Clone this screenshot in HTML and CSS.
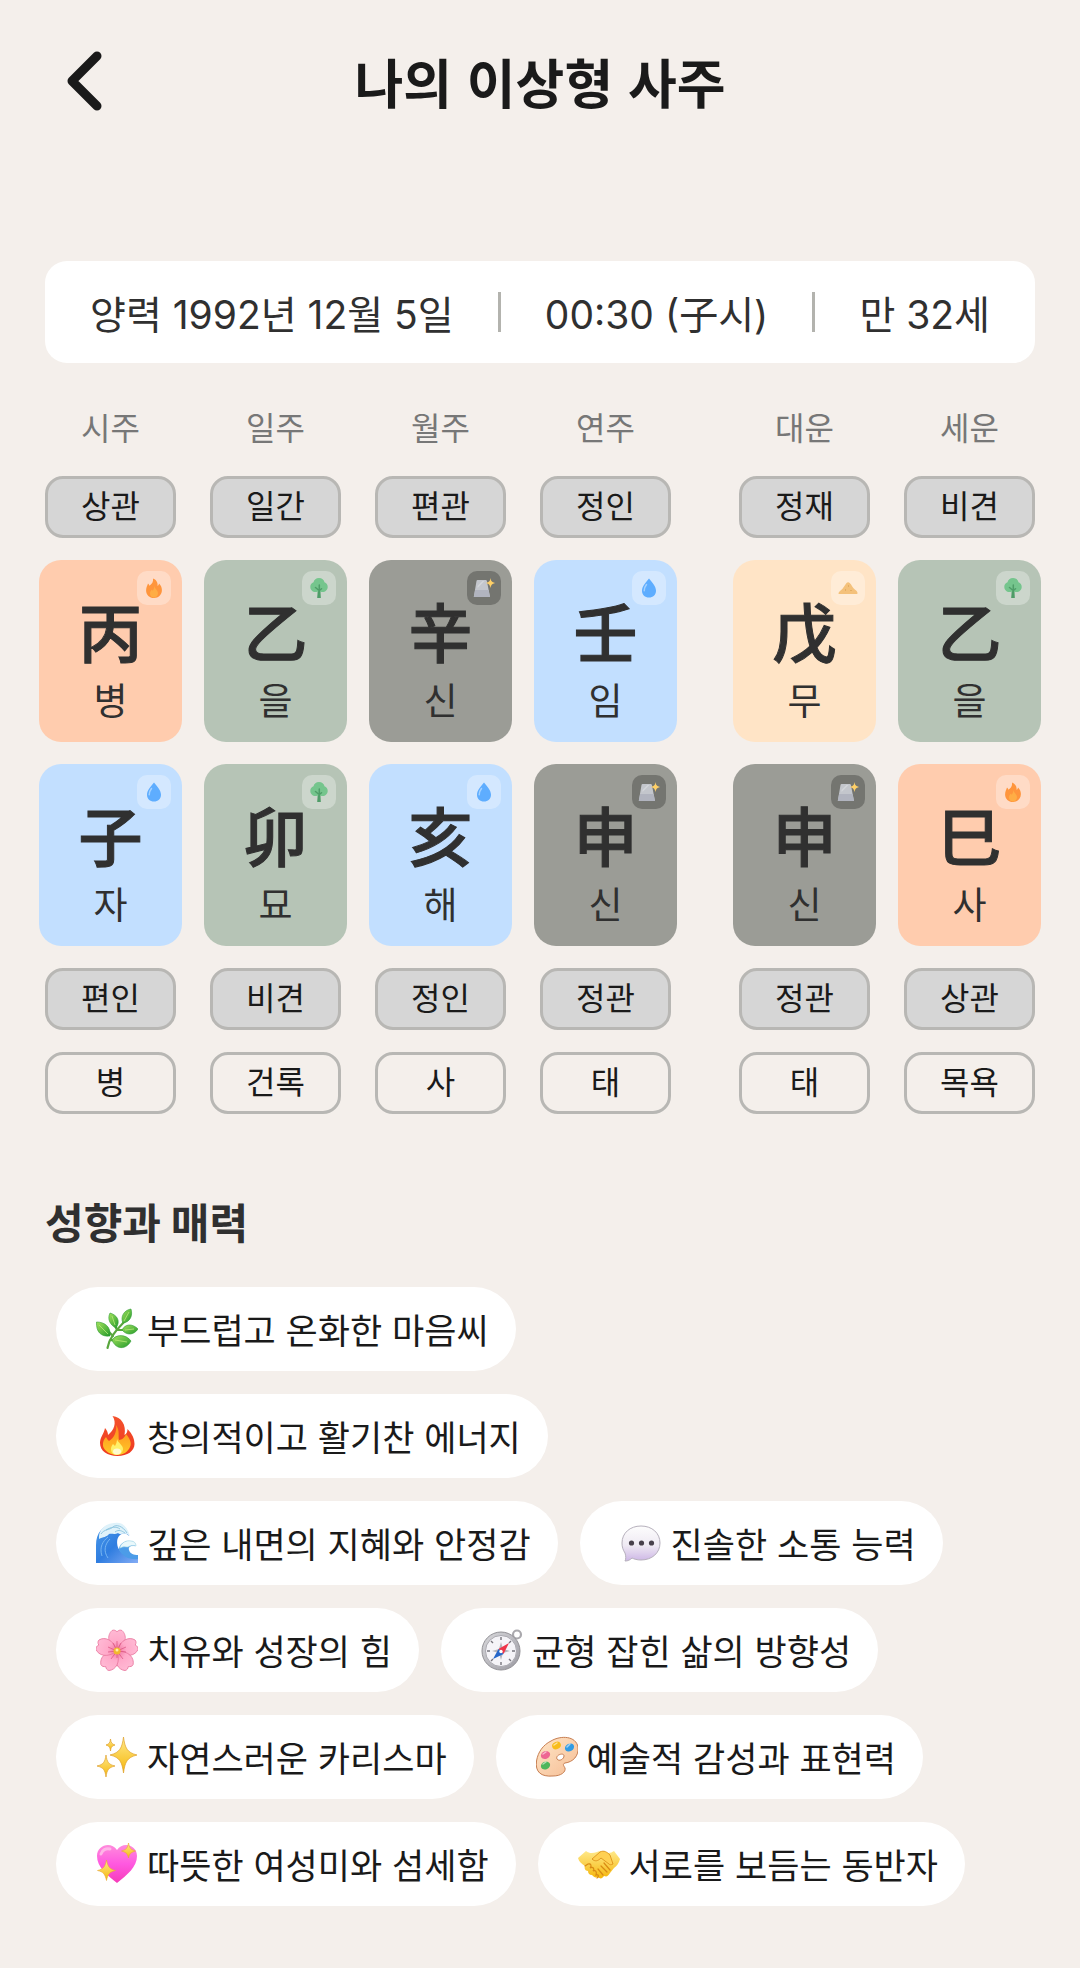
FILE: index.html
```
<!DOCTYPE html>
<html lang="ko">

<head>
  <meta charset="UTF-8" />
  <meta name="viewport" content="width=device-width, initial-scale=1" />
  <title>나의 이상형 사주</title>
  <link rel="stylesheet" href="styles.css">
</head>

<body>
  <!-- Shared icons -->
  <svg class="sprite" aria-hidden="true">
    <defs>
      <linearGradient id="leafFill" x1="0" y1="0" x2="1" y2="1">
        <stop offset="0" stop-color="#a4e25c" /><stop offset="1" stop-color="#249a2c" />
      </linearGradient>
      <linearGradient id="flameOuter" x1="0" y1="0" x2="0" y2="1">
        <stop offset="0" stop-color="#f4512c" /><stop offset="1" stop-color="#ee3b20" />
      </linearGradient>
      <linearGradient id="flameInner" x1="0" y1="0" x2="0" y2="1">
        <stop offset="0" stop-color="#ff8a1c" /><stop offset="1" stop-color="#ffc928" />
      </linearGradient>
      <linearGradient id="waveFill" x1="0" y1="0" x2="1" y2="1">
        <stop offset="0" stop-color="#4b9bea" /><stop offset=".5" stop-color="#2f7de0" /><stop offset="1" stop-color="#83acf5" />
      </linearGradient>
      <linearGradient id="bubbleFill" x1="0" y1="0" x2="0" y2="1">
        <stop offset="0" stop-color="#fdfdfd" /><stop offset=".55" stop-color="#efeaf3" /><stop offset="1" stop-color="#cdb6e6" />
      </linearGradient>
      <radialGradient id="petalFill" gradientUnits="userSpaceOnUse" cx="21" cy="22" r="21">
        <stop offset="0" stop-color="#ee6f9c" /><stop offset=".45" stop-color="#ffa9c9" /><stop offset="1" stop-color="#ffb9d4" />
      </radialGradient>
      <linearGradient id="goldFill" x1="0" y1="0" x2="0" y2="1">
        <stop offset="0" stop-color="#ffe98a" /><stop offset="1" stop-color="#f5b70c" />
      </linearGradient>
      <linearGradient id="heartFill" x1="0" y1="0" x2="0" y2="1">
        <stop offset="0" stop-color="#ff8bdc" /><stop offset=".5" stop-color="#ff58e0" /><stop offset="1" stop-color="#f63cb9" />
      </linearGradient>
      <linearGradient id="woodFill" x1="0" y1="0" x2="1" y2="1">
        <stop offset="0" stop-color="#ffe6c8" /><stop offset="1" stop-color="#f5bd94" />
      </linearGradient>
      <linearGradient id="metalFill" x1="0" y1="0" x2="1" y2="1">
        <stop offset="0" stop-color="#d9d9dc" /><stop offset="1" stop-color="#9b9aa2" />
      </linearGradient>
    </defs>

    <symbol id="el-fire" viewBox="0 0 20 20">
      <path d="M9 .5c3 1.200 5 3.500 4.600 7.500.8-.5 1.200-1.400 1.400-2.500 2 1.800 2.900 4.200 2.900 6.500 0 4.500-3.400 8-7.900 8s-7.900-3.200-7.900-7.600C2.100 9.500 3.200 8 4 5.500c.8.600 1.200 1.300 1.400 2.200C8 6 9.500 4 9 .5z" fill="#ff953c" />
      <path d="M10.200 8c.6 2.600 3.800 4.400 3.800 7.300 0 2.500-1.700 4.100-4 4.100s-4-1.600-4-4c0-1.800.9-2.900 1.900-4 .4.600.6 1 .8 1.400 1.100-1.200 1.700-3 1.500-4.800z" fill="#ffad45" />
    </symbol>
    <symbol id="el-wood" viewBox="0 0 20 20">
      <path d="M9 9h2.200l.6 11H8.200z" fill="#4f9d68" />
      <path d="M10 0c2.900 0 5 1.700 5.500 4.200 2 .7 3.200 2.300 3.200 4.500 0 3.200-2.300 5.300-5.300 5.300-1.200 0-2-.2-3.400-1-1.400.8-2.200 1-3.400 1-3 0-5.300-2.100-5.300-5.300 0-2.200 1.200-3.800 3.200-4.500C5 1.700 7.100 0 10 0z" fill="#75c58d" />
      <path d="M6.500 9.500l3 2.500M10.300 7v13M11 12l1.500-1.300" fill="none" stroke="#4f9d68" stroke-width="1.500" stroke-linecap="round" />
    </symbol>
    <symbol id="el-water" viewBox="0 0 20 20">
      <path d="M10 .5c3.200 4 7 8 7 12.200 0 4-3 6.800-7 6.800s-7-2.800-7-6.800C3 8.500 6.800 4.500 10 .5z" fill="#5eadff" />
      <path d="M7.500 6.500C6 8.500 5 10.300 5.200 12.700" fill="none" stroke="#a4d1ff" stroke-width="1.500" stroke-linecap="round" />
    </symbol>
    <symbol id="el-earth" viewBox="0 0 20 20">
      <path d="M.5 15c.8-2 2.700-2.600 4-4.200L8.500 5c1-.9 2.300-.9 3.200 0 1.800 1.700 2.400 4 4.300 5.700 1.600 1.300 3 2 3.600 4.300 0 .7-.5 1-1.100 1H1.400C.7 16 .4 15.600.5 15z" fill="#f4c17b" />
      <path d="M7 12h1M12.500 12.500h1M10 8h1" stroke="#d49b4f" />
    </symbol>
    <symbol id="el-metal" viewBox="0 0 22 20">
      <path d="M4.600 2h8.200c.6 0 1 .3 1.100.9L17 19H.8L3.500 2.900c.1-.6.5-.9 1.100-.9z" fill="#c3c6cc" />
      <path d="M2.100 12h13.500L17 19H.8z" fill="#b1b4bf" />
      <path d="M4.500 8l5-5h2l-7 7z" fill="#d3d6da" />
      <path d="M17.500 0c.5 3 1.200 4 4.500 5-3.300 1-4 2-4.500 5.200-.5-3.200-1.200-4.200-4.500-5.200 3.300-1 4-2 4.500-5z" fill="#ffd067" />
    </symbol>
  </svg>

  <header class="topbar">
    <button class="back" type="button" aria-label="뒤로">
      <svg viewBox="0 0 36 60" width="36" height="60" aria-hidden="true">
        <path d="M31 5L6 30l25 25" fill="none" stroke="currentColor" stroke-width="9" stroke-linecap="round" stroke-linejoin="round" />
      </svg>
    </button>
    <h1>나의 이상형 사주</h1>
  </header>

  <main>
    <!-- Birth info -->
    <div class="birth">
      <span>양력 1992년 12월 5일</span>
      <i class="divider"></i>
      <span>00:30 (子시)</span>
      <i class="divider"></i>
      <span>만 32세</span>
    </div>

    <!-- Pillars, the narrow empty column splits off the luck pillars -->
    <table class="pillars">
      <colgroup>
        <col span="4">
        <col class="split">
        <col span="2">
      </colgroup>
      <thead>
        <tr>
          <th scope="col">시주</th>
          <th scope="col">일주</th>
          <th scope="col">월주</th>
          <th scope="col">연주</th>
          <td></td>
          <th scope="col">대운</th>
          <th scope="col">세운</th>
        </tr>
      </thead>
      <tbody>
        <tr>
          <td><div class="tag filled">상관</div></td>
          <td><div class="tag filled">일간</div></td>
          <td><div class="tag filled">편관</div></td>
          <td><div class="tag filled">정인</div></td>
          <td></td>
          <td><div class="tag filled">정재</div></td>
          <td><div class="tag filled">비견</div></td>
        </tr>
        <tr>
          <td><div class="card fire"><span class="badge"><svg><use href="#el-fire" /></svg></span><b>丙</b><span>병</span></div></td>
          <td><div class="card wood"><span class="badge"><svg><use href="#el-wood" /></svg></span><b>乙</b><span>을</span></div></td>
          <td><div class="card metal"><span class="badge"><svg><use href="#el-metal" /></svg></span><b>辛</b><span>신</span></div></td>
          <td><div class="card water"><span class="badge"><svg><use href="#el-water" /></svg></span><b>壬</b><span>임</span></div></td>
          <td></td>
          <td><div class="card earth"><span class="badge"><svg><use href="#el-earth" /></svg></span><b>戊</b><span>무</span></div></td>
          <td><div class="card wood"><span class="badge"><svg><use href="#el-wood" /></svg></span><b>乙</b><span>을</span></div></td>
        </tr>
        <tr>
          <td><div class="card water"><span class="badge"><svg><use href="#el-water" /></svg></span><b>子</b><span>자</span></div></td>
          <td><div class="card wood"><span class="badge"><svg><use href="#el-wood" /></svg></span><b>卯</b><span>묘</span></div></td>
          <td><div class="card water"><span class="badge"><svg><use href="#el-water" /></svg></span><b>亥</b><span>해</span></div></td>
          <td><div class="card metal"><span class="badge"><svg><use href="#el-metal" /></svg></span><b>申</b><span>신</span></div></td>
          <td></td>
          <td><div class="card metal"><span class="badge"><svg><use href="#el-metal" /></svg></span><b>申</b><span>신</span></div></td>
          <td><div class="card fire"><span class="badge"><svg><use href="#el-fire" /></svg></span><b>巳</b><span>사</span></div></td>
        </tr>
        <tr>
          <td><div class="tag filled">편인</div></td>
          <td><div class="tag filled">비견</div></td>
          <td><div class="tag filled">정인</div></td>
          <td><div class="tag filled">정관</div></td>
          <td></td>
          <td><div class="tag filled">정관</div></td>
          <td><div class="tag filled">상관</div></td>
        </tr>
        <tr>
          <td><div class="tag">병</div></td>
          <td><div class="tag">건록</div></td>
          <td><div class="tag">사</div></td>
          <td><div class="tag">태</div></td>
          <td></td>
          <td><div class="tag">태</div></td>
          <td><div class="tag">목욕</div></td>
        </tr>
      </tbody>
    </table>

    <!-- Traits -->
    <section class="traits">
      <h2>성향과 매력</h2>
      <ul class="chips">
        <li>
          <svg viewBox="0 0 42 42" aria-hidden="true">
            <path d="M11.500 40C13 31 18 24 32 10M17 28l-8-8M21 22l-4-9M22 22h9M14 32l9 1" fill="none" stroke="#58a63c" stroke-width="2.200" stroke-linecap="round" />
            <g fill="url(#leafFill)" stroke="#2c9a30" stroke-width=".6">
              <path d="M14 28C5 29 0 24 .5 14 9 14 15 19 14 28z" />
              <path d="M20 20c-6-3-9-9-6-15 7 2 11 8 6 15z" />
              <path d="M27 15c-3-6 1-13 8-14 2 7-1 13-8 14z" />
              <path d="M26 22c3-6 10-7 16-1-4 6-11 7-16 1z" />
              <path d="M16 32c4-6 14-6 19 1-5 9-15 9-19-1z" />
            </g>
            <path d="M3 17l9 9M16 8l3 9M33 4l-5 9M29 22l9-1M19 32l12 2" stroke="#b8ea79" stroke-width=".8" />
          </svg>
          부드럽고 온화한 마음씨
        </li>
        <li>
          <svg viewBox="0 0 42 42" aria-hidden="true">
            <path d="M16.500 1c9 1 14 9 12 19 2-1 3-3 3-6 5 5 7 10 7 15 0 7-7 12-17 12S4 36 4 28c0-6 4-9 5-15 2 2 3 5 3 7 6-5 9-12 4.500-19z" fill="url(#flameOuter)" />
            <path d="M20 10c4 5 2 11 3 15 3 0 6-3 7-6 4 5 6 9 4 13-2 5-7 8-13 8S8 36 7 31c-.5-4 1-7 3-9 1 2 2 3 3 4 5-3 8-9 7-16z" fill="url(#flameInner)" />
            <path d="M21 24c1 4 6 6 6 10 0 3-3 6-6.500 6S15 37 15 34c0-2 1-4 2-5l2 2c1-2 2-4 2-7z" fill="#fff06a" />
            <ellipse cx="21" cy="36.500" rx="4" ry="3" fill="#fffbd0" />
          </svg>
          창의적이고 활기찬 에너지
        </li>
        <li>
          <svg viewBox="0 0 42 42" aria-hidden="true">
            <path d="M0 41V23C0 11 7 3 17 2c8-1 14 3 16 12-3-3-6-3-9-1-5 4-3 15 2 17 5 2 9 4 16 4v7z" fill="url(#waveFill)" />
            <path d="M3 14C4 6 11 1 19 1c7-1 12 3 15 13l-3-2c-4-1-7 1-9-1-4 2-6 0-9 1-2 3-6 3-10 5z" fill="#dff2fa" />
            <path d="M5 12c3-5 9-4 12-7s10-1 14 6M10 8c5-3 10-4 14-1M19 10c4-3 7-1 10 1" fill="none" stroke="#8fc6e0" stroke-width="1" />
            <path d="M23 28c0-6 5-9 11-9 3 0 5 2 5 5-4-1-7 1-6 4 1 4 5 5 9 5v4c-8 1-15-2-19-9z" fill="#4c9ce8" />
            <path d="M24 25c2-5 7-7 11-6 3 0 5 2 5 5-4-1-6 0-8 1-3 0-4-1-8 1z" fill="#e9f8fb" stroke="#9bd1e4" stroke-width=".6" />
            <path d="M6 34C3 25 7 19 12 15M12 36C7 29 9 22 14 17" fill="none" stroke="#76b5f2" stroke-width="1" />
          </svg>
          깊은 내면의 지혜와 안정감
        </li>
        <li>
          <svg viewBox="0 0 42 42" aria-hidden="true">
            <path d="M21 4c11 0 19 7 19 17s-8 17-19 17c-4 0-7-1-9-2-2 2-4 3-7 3 1-2 1-5 0-8-2-3-3-6-3-10C2 11 10 4 21 4z" fill="url(#bubbleFill)" stroke="#b6b0bc" />
            <circle cx="11.500" cy="21" r="2.600" fill="#48414b" />
            <circle cx="21.500" cy="21" r="2.600" fill="#48414b" />
            <circle cx="31.500" cy="21" r="2.600" fill="#48414b" />
          </svg>
          진솔한 소통 능력
        </li>
        <li>
          <svg viewBox="0 0 42 42" aria-hidden="true">
            <g fill="url(#petalFill)" stroke="#e8799f" stroke-width=".8">
              <path id="petal" d="M21 22C11 15 11 6 16 1.500c2-.9 3.500-.2 5 1.300 1.500-1.500 3-2.200 5-1.300C31 6 31 15 21 22z" />
              <use href="#petal" transform="rotate(72 21 22)" />
              <use href="#petal" transform="rotate(144 21 22)" />
              <use href="#petal" transform="rotate(216 21 22)" />
              <use href="#petal" transform="rotate(288 21 22)" />
            </g>
            <path d="M21 22V12M21 22l-4-8M21 22l4-8M21 22l9-4M21 22l9 1M21 22l6 8M21 22l-6 8M21 22l-9 1M21 22l-9-4M21 22v7" stroke="#d84f7d" stroke-width=".7" />
            <circle cx="21" cy="22" r="3.500" fill="#f2b72d" />
            <circle cx="21" cy="21" r="1.500" fill="#fff0a3" />
          </svg>
          치유와 성장의 힘
        </li>
        <li>
          <svg viewBox="0 0 42 42" aria-hidden="true">
            <circle cx="36" cy="5.500" r="4" fill="none" stroke="#aaa9ad" stroke-width="2.200" />
            <circle cx="20" cy="22" r="19" fill="url(#metalFill)" stroke="#929196" />
            <circle cx="20" cy="22" r="15.500" fill="#f5f4f8" stroke="#aaa9b0" />
            <path d="M20 8v3M20 33v3M6 22h3M31 22h3M10 12l2 2M28 30l2 2M10 32l2-2M30 12l-2 2" stroke="#77757d" stroke-width="1.400" />
            <path d="M20 13l2 7 7 2-7 2-2 7-2-7-7-2 7-2z" fill="#b5b4ba" />
            <path d="M28 14l-5.500 11-5-5z" fill="#ee3449" />
            <path d="M12 30l5.500-10 5 5z" fill="#2667c9" />
            <circle cx="20" cy="22.500" r="1.700" fill="#fff" />
          </svg>
          균형 잡힌 삶의 방향성
        </li>
        <li>
          <svg viewBox="0 0 42 42" aria-hidden="true">
            <g fill="url(#goldFill)" stroke="#dfa12c" stroke-width=".7">
              <path d="M27.500 1c1.500 11 3.500 15.500 13.500 18-10 2.500-12 7-13.500 18-1.500-11-3.500-15.500-13.500-18 10-2.500 12-7 13.500-18z" />
              <path d="M10 19c1 7 2.500 9.500 9 11-6.500 1.500-8 4-9 11-1-7-2.500-9.500-9-11 6.500-1.500 8-4 9-11z" />
              <path d="M14.500 3c.5 4 1.500 5 4.500 6-3 1-4 2-4.500 6-.5-4-1.500-5-4.500-6 3-1 4-2 4.500-6z" />
            </g>
          </svg>
          자연스러운 카리스마
        </li>
        <li>
          <svg viewBox="0 0 42 42" aria-hidden="true">
            <path fill-rule="evenodd" d="M15 5C25-1 40 0 42 11c1 9-5 15-13 16-3 1-1 3 0 5 1 4-4 8-12 8C5 41-1 36 .5 25 2 16 7 9 15 5zm6 18c2 3 7 0 7-3 0-4-9-1-7 3z" fill="url(#woodFill)" stroke="#c77e51" />
            <ellipse cx="20.500" cy="9.500" rx="4.500" ry="3.600" fill="#f8bc1b" transform="rotate(-25 20.500 9.500)" />
            <ellipse cx="33.500" cy="11.500" rx="4.800" ry="3.800" fill="#319be3" transform="rotate(-30 33.500 11.500)" />
            <ellipse cx="9.500" cy="19" rx="4.800" ry="3.800" fill="#ee6792" transform="rotate(-25 9.500 19)" />
            <ellipse cx="9.500" cy="29.500" rx="4.800" ry="3.800" fill="#4fb65b" transform="rotate(-25 9.500 29.500)" />
            <path d="M18 9l3-2M31 11l3-3M7 18l3-2M7 28l3-2" stroke="#fff" stroke-opacity=".55" stroke-width="1.500" stroke-linecap="round" />
          </svg>
          예술적 감성과 표현력
        </li>
        <li>
          <svg viewBox="0 0 42 42" aria-hidden="true">
            <path d="M21 40C11 32 1 24 1 13 1 2 15-2 21 7c6-9 20-5 20 6 0 11-10 19-20 27z" fill="url(#heartFill)" />
            <path d="M5 11c1-4 5-6 9-5" fill="none" stroke="#ffb5e8" stroke-width="3" stroke-linecap="round" />
            <g fill="url(#goldFill)" stroke="#e8a735" stroke-width=".6">
              <path d="M32.500 0c1 5 2 6.500 7 8-5 1.500-6 3-7 7-1-4-2-5.500-7-7 5-1.500 6-3 7-8z" />
              <path d="M10.500 17c1.500 7 3 9 9 10.500-6 1.500-7.500 3.500-9 10-1.500-6.500-3-8.500-9-10C7.500 26 9 24 10.500 17z" />
            </g>
          </svg>
          따뜻한 여성미와 섬세함
        </li>
        <li>
          <svg viewBox="0 0 42 42" aria-hidden="true">
            <path d="M0 15l8-7c4 3 7 2 11 1 3-2 7-1 11 1 3 0 4-1 6-2l6 8c-1 4-3 7-6 9l-4 5c-2 3-3 4-6 3-2 3-4 3-6 1-3 1-4 0-6-2-3 0-4-2-4-4-3 0-4-3-3-5-3-2-6-4-7-8z" fill="url(#goldFill)" />
            <path d="M14 16l8-7c4-2 7 0 10 3l3 9c-2 1-3 1-4 0l-8-6c-3 3-6 4-9 1z" fill="#ffd052" stroke="#d98a13" stroke-width=".8" />
            <path d="M7 23l3-2c3-1 4 2 2 4 3-2 5 1 3 3 3-1 4 1 3 4 3-1 3 2 1 3M26 20l6 7M23 23l6 6M20 26l5 6" fill="none" stroke="#d98a13" stroke-width="1.200" stroke-linecap="round" />
          </svg>
          서로를 보듬는 동반자
        </li>
      </ul>
    </section>
  </main>
</body>

</html>
```
FILE: styles.css
```
* {
  box-sizing: border-box;
}

body {
  font-family: Inter, 'Noto Sans CJK KR', sans-serif;
  background: #f4efeb;
  color: #1a1a1a;
  margin: 0;
}

.sprite {
  position: absolute;
  width: 0;
  height: 0;
}

.topbar {
  display: grid;
  grid-template-columns: 80px 1fr 80px;
  align-items: center;
  height: 161px;
  padding: 0 44px;
}

.back {
  display: flex;
  justify-content: center;
  padding: 0;
  border: none;
  background: none;
  color: #1a1a1a;
  cursor: pointer;
}

h1 {
  font-family: 'Noto Sans CJK KR', sans-serif;
  font-size: 53px;
  font-weight: 700;
  line-height: 80px;
  text-align: center;
  margin: 0;
}

.birth {
  display: flex;
  justify-content: space-between;
  align-items: center;
  margin: 100px 45px 0;
  padding: 0 45px;
  height: 102px;
  border-radius: 22px;
  background: #fff;
  color: #303030;
  font-size: 39px;
  white-space: nowrap;
}

.divider {
  width: 3px;
  height: 40px;
  background: #b3b3ae;
}

.pillars {
  table-layout: fixed;
  width: calc(100% - 34px);
  margin: 19px 17px 0;
  border-spacing: 22px;
  text-align: center;
}

.pillars .split {
  width: 12px;
}

.pillars th,
.pillars td {
  padding: 0;
}

.pillars th {
  font-size: 32px;
  font-weight: 400;
  line-height: 50px;
  color: #777;
}

.tag {
  height: 62px;
  margin: 0 6px;
  border: 3px solid #b8b7b4;
  border-radius: 18px;
  font-size: 32px;
  line-height: 56px;
}

.filled {
  background: #d6d6d6;
}

.card {
  position: relative;
  display: flex;
  flex-direction: column;
  align-items: center;
  height: 182px;
  padding-top: 40px;
  border-radius: 22px;
  color: #303030;
}

.card b {
  font-size: 64px;
  font-weight: 500;
  line-height: 68px;
  -webkit-text-stroke: 1px currentColor;
}

.card > span:last-child {
  font-size: 37px;
  line-height: 68px;
}

.badge {
  position: absolute;
  top: 11px;
  right: 11px;
  display: flex;
  justify-content: center;
  align-items: center;
  width: 34px;
  height: 34px;
  border-radius: 10px;
  background: rgba(255, 255, 255, 0.3);
}

.badge svg {
  width: 20px;
  height: 20px;
}

.fire {
  background: #ffccae;
}

.wood {
  background: #b6c4b6;
}

.water {
  background: #c2dfff;
}

.earth {
  background: #ffe4c6;
}

.metal {
  background: #9b9c96;
}

.metal .badge {
  background: rgba(0, 0, 0, 0.25);
}

.metal .badge svg {
  width: 22px;
}

.traits {
  padding: 58px 45px 48px;
}

h2 {
  font-size: 42px;
  font-weight: 700;
  line-height: 60px;
  color: #303030;
  margin: 0 0 33px;
}

.chips {
  display: flex;
  flex-wrap: wrap;
  gap: 23px 22px;
  margin: 0;
  padding: 0 45px 0 11px;
  list-style: none;
}

.chips li {
  display: flex;
  align-items: center;
  gap: 9px;
  height: 84px;
  padding: 0 27px 0 40px;
  border-radius: 42px;
  background: #fff;
  font-family: 'Noto Sans CJK KR', sans-serif;
  font-size: 35px;
  line-height: 48px;
  white-space: nowrap;
}

.chips svg {
  flex: none;
  width: 42px;
  height: 42px;
}
```
